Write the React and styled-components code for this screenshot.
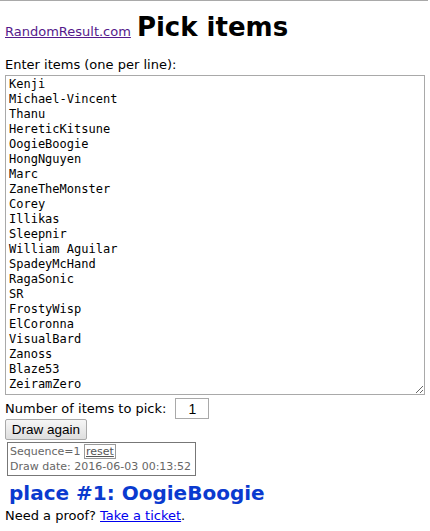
import styled, { createGlobalStyle } from "styled-components";

const GlobalStyle = createGlobalStyle`
  body {
    margin: 0;
    background: #fff;
    font-family: "DejaVu Sans", Verdana, sans-serif;
    font-size: 13px;
    color: #000;
  }
`;

const Page = styled.div`
  border-top: 1px solid #a9a9a9;
  width: 428px;
  padding: 0 5px;
  box-sizing: border-box;
`;

const Header = styled.div`
  display: flex;
  align-items: baseline;
  gap: 6px;
  height: 50px;
  padding-top: 7px;
  box-sizing: border-box;
`;

const SiteLink = styled.a`
  color: #551a8b;
  font-size: 13px;
  text-decoration: underline;
`;

const Title = styled.h1`
  margin: 0;
  font-size: 26px;
  font-weight: bold;
  line-height: 38px;
`;

const Label = styled.div`
  line-height: 16px;
  margin-top: 6px;
`;

const Items = styled.textarea`
  display: block;
  width: 420px;
  height: 320px;
  box-sizing: border-box;
  margin: 2px 0 0;
  padding: 1px 3px;
  border: 1px solid #a9a9a9;
  font-family: "DejaVu Sans Mono", "Liberation Mono", monospace;
  font-size: 12px;
  line-height: 15px;
  color: #000;
  resize: both;
  overflow: hidden;
`;

const CountRow = styled.div`
  display: flex;
  align-items: center;
  gap: 9px;
  margin-top: 3px;
  height: 21px;
`;

const CountInput = styled.input`
  width: 34px;
  height: 21px;
  box-sizing: border-box;
  border: 1px solid #a9a9a9;
  text-align: center;
  font-family: "Liberation Sans", Arial, sans-serif;
  font-size: 14px;
  padding: 0;
`;

const DrawButton = styled.button`
  display: block;
  width: 82px;
  height: 21px;
  padding: 0;
  font-family: "Liberation Sans", Arial, sans-serif;
  font-size: 13.5px;
  color: #000;
  background: linear-gradient(#f6f6f6, #dedede);
  border: 1px solid #a9a9a9;
  border-radius: 2px;
`;

const SeqBox = styled.div`
  margin: 2px 0 0 2px;
  width: 189px;
  height: 34px;
  box-sizing: border-box;
  border: 1px solid #777;
  padding: 1px 2px;
  font-size: 11px;
  color: #666;
  line-height: 15px;
  white-space: nowrap;
`;

const ResetLink = styled.span`
  display: inline-block;
  border: 1px solid #999;
  padding: 0 1px;
  line-height: 13px;
  font-size: 11px;
  text-decoration: underline;
  color: #555;
`;

const Place = styled.div`
  margin: 5px 0 0 4px;
  font-size: 20px;
  font-weight: bold;
  color: #0a3acf;
  line-height: 24px;
`;

const Proof = styled.div`
  margin-top: 2px;
  line-height: 17px;
  a {
    color: #0000ee;
  }
`;

const names = [
  "Kenji",
  "Michael-Vincent",
  "Thanu",
  "HereticKitsune",
  "OogieBoogie",
  "HongNguyen",
  "Marc",
  "ZaneTheMonster",
  "Corey",
  "Illikas",
  "Sleepnir",
  "William Aguilar",
  "SpadeyMcHand",
  "RagaSonic",
  "SR",
  "FrostyWisp",
  "ElCoronna",
  "VisualBard",
  "Zanoss",
  "Blaze53",
  "ZeiramZero",
];

const App = () => {
  return (
    <Page>
      <GlobalStyle />
      <Header>
        <SiteLink href="#">RandomResult.com</SiteLink>
        <Title>Pick items</Title>
      </Header>
      <Label>Enter items (one per line):</Label>
      <Items defaultValue={names.join("\n")} spellCheck={false} />
      <CountRow>
        <span>Number of items to pick:</span>
        <CountInput defaultValue="1" />
      </CountRow>
      <DrawButton>Draw again</DrawButton>
      <SeqBox>
        Sequence=1 <ResetLink>reset</ResetLink>
        <br />
        Draw date: 2016-06-03 00:13:52
      </SeqBox>
      <Place>place #1: OogieBoogie</Place>
      <Proof>
        Need a proof? <a href="#">Take a ticket</a>.
      </Proof>
    </Page>
  );
};

export default App;
